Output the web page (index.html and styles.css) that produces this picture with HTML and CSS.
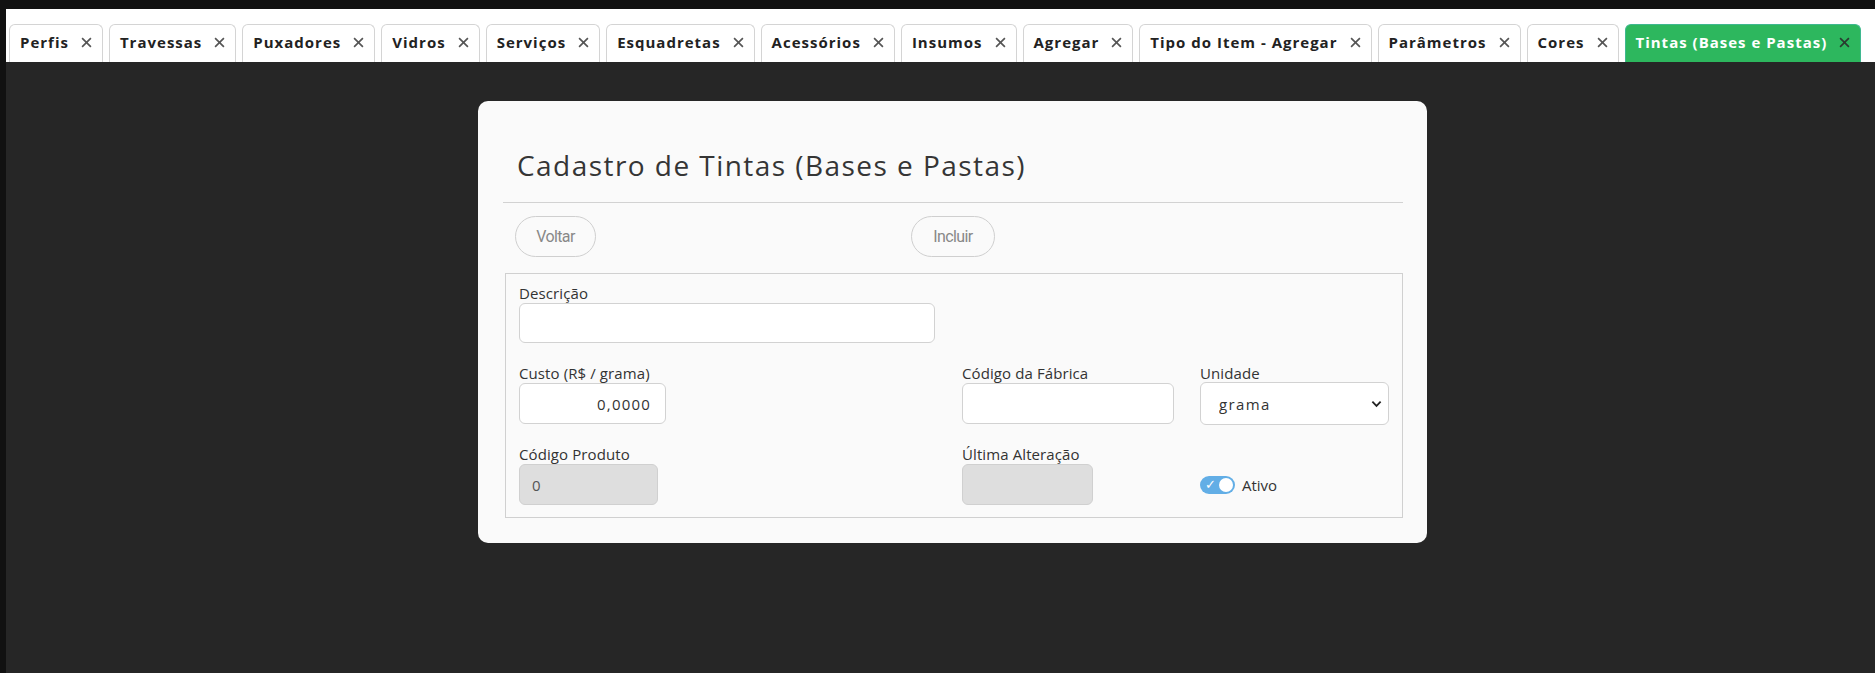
FILE: index.html
```html
<!DOCTYPE html>
<html lang="pt-BR">
<head>
<meta charset="utf-8">
<title>Cadastro de Tintas (Bases e Pastas)</title>
<link rel="stylesheet" href="styles.css">
</head>
<body>
<div class="app">
  <nav class="tabbar">
    <div class="tab"><span class="tab-label">Perfis</span><svg class="tab-x" viewBox="0 0 10 10"><path d="M1 1L9 9M9 1L1 9"/></svg></div>
    <div class="tab"><span class="tab-label">Travessas</span><svg class="tab-x" viewBox="0 0 10 10"><path d="M1 1L9 9M9 1L1 9"/></svg></div>
    <div class="tab"><span class="tab-label">Puxadores</span><svg class="tab-x" viewBox="0 0 10 10"><path d="M1 1L9 9M9 1L1 9"/></svg></div>
    <div class="tab"><span class="tab-label">Vidros</span><svg class="tab-x" viewBox="0 0 10 10"><path d="M1 1L9 9M9 1L1 9"/></svg></div>
    <div class="tab"><span class="tab-label">Serviços</span><svg class="tab-x" viewBox="0 0 10 10"><path d="M1 1L9 9M9 1L1 9"/></svg></div>
    <div class="tab"><span class="tab-label">Esquadretas</span><svg class="tab-x" viewBox="0 0 10 10"><path d="M1 1L9 9M9 1L1 9"/></svg></div>
    <div class="tab"><span class="tab-label">Acessórios</span><svg class="tab-x" viewBox="0 0 10 10"><path d="M1 1L9 9M9 1L1 9"/></svg></div>
    <div class="tab"><span class="tab-label">Insumos</span><svg class="tab-x" viewBox="0 0 10 10"><path d="M1 1L9 9M9 1L1 9"/></svg></div>
    <div class="tab"><span class="tab-label">Agregar</span><svg class="tab-x" viewBox="0 0 10 10"><path d="M1 1L9 9M9 1L1 9"/></svg></div>
    <div class="tab"><span class="tab-label">Tipo do Item - Agregar</span><svg class="tab-x" viewBox="0 0 10 10"><path d="M1 1L9 9M9 1L1 9"/></svg></div>
    <div class="tab"><span class="tab-label">Parâmetros</span><svg class="tab-x" viewBox="0 0 10 10"><path d="M1 1L9 9M9 1L1 9"/></svg></div>
    <div class="tab"><span class="tab-label">Cores</span><svg class="tab-x" viewBox="0 0 10 10"><path d="M1 1L9 9M9 1L1 9"/></svg></div>
    <div class="tab tab-active"><span class="tab-label">Tintas (Bases e Pastas)</span><svg class="tab-x" viewBox="0 0 10 10"><path d="M1 1L9 9M9 1L1 9"/></svg></div>
  </nav>
  <main class="main">
    <section class="card">
      <h1 class="card-title">Cadastro de Tintas (Bases e Pastas)</h1>
      <hr class="card-rule">
      <div class="toolbar">
        <div class="toolbar-left"><button class="btn" type="button">Voltar</button></div>
        <div class="toolbar-center"><button class="btn" type="button">Incluir</button></div>
        <div class="toolbar-right"></div>
      </div>
      <div class="form-box">
        <div class="field f-desc">
          <label class="lbl">Descrição</label>
          <input class="inp inp-desc" type="text">
        </div>
        <div class="field f-custo">
          <label class="lbl">Custo (R$ / grama)</label>
          <input class="inp inp-custo" type="text" value="0,0000">
        </div>
        <div class="field f-fab">
          <label class="lbl">Código da Fábrica</label>
          <input class="inp inp-fab" type="text">
        </div>
        <div class="field f-unid">
          <label class="lbl">Unidade</label>
          <div class="select-wrap">
            <select class="sel"><option>grama</option></select>
            <svg class="sel-chev" viewBox="0 0 12 8"><path d="M1.5 1.5L6 6L10.5 1.5"/></svg>
          </div>
        </div>
        <div class="field f-cod">
          <label class="lbl">Código Produto</label>
          <input class="inp inp-ro inp-cod" type="text" value="0" readonly>
        </div>
        <div class="field f-ult">
          <label class="lbl">Última Alteração</label>
          <input class="inp inp-ro inp-ult" type="text" readonly>
        </div>
        <div class="field f-ativo">
          <div class="toggle-row">
            <span class="toggle"><span class="toggle-check">✓</span><span class="toggle-knob"></span></span>
            <span class="toggle-lbl">Ativo</span>
          </div>
        </div>
      </div>
    </section>
  </main>
</div>
</body>
</html>
```

FILE: styles.css
```css
html, body {
  margin: 0;
  padding: 0;
  height: 100%;
}
body {
  background: #111111;
  font-family: "Open Sans", "DejaVu Sans", sans-serif;
}
.app {
  box-sizing: border-box;
  height: 100%;
  padding: 9px 0 0 6px;
  display: flex;
  flex-direction: column;
}
.tabbar {
  background: #ffffff;
  height: 53px;
  box-sizing: border-box;
  padding: 15px 0 0 3px;
  display: flex;
  align-items: stretch;
  gap: 6px;
}
.tab {
  display: flex;
  align-items: center;
  gap: 12px;
  padding: 0 10px 3px 10px;
  border: 1px solid #d4d4d4;
  border-bottom: none;
  border-radius: 6px 6px 0 0;
  background: #ffffff;
  color: #222222;
}
.tab-label {
  font-family: "Open Sans", sans-serif;
  font-weight: 700;
  font-size: 15px;
  letter-spacing: 1px;
  line-height: 18px;
}
.tab-x {
  width: 11px;
  height: 11px;
  fill: none;
  stroke: #555555;
  stroke-width: 1.5;
}
.tab-active {
  background: #2db75e;
  border-color: #3fb88f;
  color: #ffffff;
}
.tab-active .tab-x {
  stroke: #2a3a30;
}
.main {
  flex: 1;
  background: #262626;
  display: flex;
  justify-content: center;
  align-items: flex-start;
  padding: 39px 0 0 24px;
}
.card {
  box-sizing: border-box;
  width: 949px;
  height: 442px;
  background: #fafafa;
  border-radius: 10px;
  padding: 46px 24px 0 25px;
}
.card-title {
  margin: 0;
  padding-left: 14px;
  font-family: "Open Sans", sans-serif;
  font-weight: 500;
  font-size: 28px;
  line-height: 37px;
  letter-spacing: 1.45px;
  color: #353535;
}
.card-rule {
  margin: 18px 0 0 0;
  border: none;
  border-top: 1px solid #d2d2d2;
  height: 0;
}
.toolbar {
  display: grid;
  grid-template-columns: 1fr auto 1fr;
  align-items: center;
  margin-top: 13px;
  padding-left: 12px;
}
.toolbar-center {
  margin-left: -12px;
}
.btn {
  height: 41px;
  box-sizing: border-box;
  border: 1px solid #cfcfcf;
  border-radius: 21px;
  background: #fafafa;
  color: #888888;
  font-family: "Roboto", sans-serif;
  font-size: 16px;
  letter-spacing: -0.6px;
  padding: 0;
}
.toolbar-left .btn { width: 81px; }
.toolbar-center .btn { width: 84px; }
.form-box {
  margin: 16px 0 0 2px;
  border: 1px solid #d0d0d0;
  box-sizing: border-box;
  height: 245px;
  padding: 10px 13px 0 13px;
  display: grid;
  grid-template-columns: 443px 238px 1fr;
  grid-template-rows: 59px 60px 60px;
  row-gap: 21px;
  align-items: start;
  color: #333333;
}
.field {
  display: flex;
  flex-direction: column;
  align-items: flex-start;
}
.f-desc { grid-column: 1; grid-row: 1; }
.f-custo { grid-column: 1; grid-row: 2; }
.f-fab { grid-column: 2; grid-row: 2; }
.f-unid { grid-column: 3; grid-row: 2; }
.f-cod { grid-column: 1; grid-row: 3; }
.f-ult { grid-column: 2; grid-row: 3; }
.f-ativo { grid-column: 3; grid-row: 3; padding-top: 19px; }
.lbl {
  font-family: "Open Sans", sans-serif;
  font-size: 15px;
  line-height: 18px;
  letter-spacing: 0.1px;
  margin-bottom: 1px;
  color: #333333;
}
.f-unid .lbl { margin-bottom: 0; }
.inp {
  box-sizing: border-box;
  height: 41px;
  border: 1px solid #d2d2d2;
  border-radius: 6px;
  background: #ffffff;
  font-family: "Open Sans", sans-serif;
  font-size: 15px;
  color: #333333;
  padding: 0 12px;
  outline: none;
}
.inp-desc { width: 416px; height: 40px; }
.inp-custo {
  width: 147px;
  text-align: right;
  padding-right: 14px;
  letter-spacing: 1.2px;
  font-size: 15px;
}
.inp-fab { width: 212px; }
.inp-ro {
  background: #dedede;
  border-color: #d0d0d0;
  color: #555555;
}
.inp-cod { width: 139px; }
.inp-ult { width: 131px; }
.select-wrap {
  position: relative;
  width: 189px;
}
.sel {
  appearance: none;
  -webkit-appearance: none;
  width: 189px;
  height: 43px;
  box-sizing: border-box;
  border: 1px solid #d2d2d2;
  border-radius: 6px;
  background: #ffffff;
  font-family: "Open Sans", sans-serif;
  font-size: 15px;
  letter-spacing: 1.4px;
  color: #333333;
  padding: 0 0 0 18px;
  outline: none;
}
.sel-chev {
  position: absolute;
  right: 7px;
  top: 18px;
  width: 11px;
  height: 8px;
  fill: none;
  stroke: #222222;
  stroke-width: 2;
  pointer-events: none;
}
.toggle-row {
  height: 41px;
  display: flex;
  align-items: center;
  gap: 7px;
}
.toggle {
  position: relative;
  width: 35px;
  height: 18px;
  border-radius: 9px;
  background: #62aee6;
  display: flex;
  align-items: center;
  justify-content: space-between;
  padding: 0 2px 0 5px;
  box-sizing: border-box;
}
.toggle-check {
  color: #ffffff;
  font-family: "DejaVu Sans", sans-serif;
  font-size: 13px;
  line-height: 13px;
}
.toggle-knob {
  width: 14px;
  height: 14px;
  border-radius: 50%;
  background: #ffffff;
}
.toggle-lbl {
  font-family: "Open Sans", sans-serif;
  font-size: 15px;
  color: #333333;
  padding-top: 1px;
}
```
